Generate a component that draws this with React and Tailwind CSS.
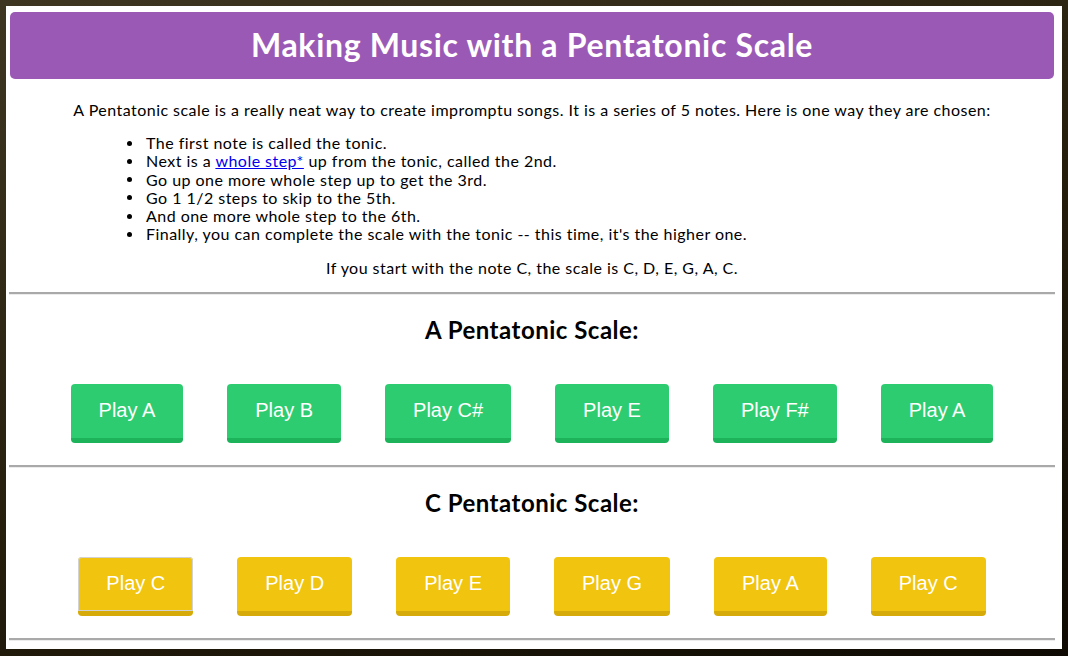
import React from 'react'

const greenNotes = ['A', 'B', 'C#', 'E', 'F#', 'A']
const yellowNotes = ['C', 'D', 'E', 'G', 'A', 'C']

const Divider = () => (
  <div className="ml-[-1px] mr-[-1px] h-[3px] border-t-2 border-[#a9a9a9] border-b border-b-[#ececec]" />
)

const PlayButton = ({ note, color, focused }) => {
  const colors =
    color === 'green'
      ? 'bg-[#2ecc71] border-[#1db35b]'
      : 'bg-[#f1c40f] border-[#d6ab09]'
  return (
    <button
      className={`${colors} ${focused ? 'shadow-[inset_0_0_0_1px_#d2d2d2]' : ''} border-b-[5px] rounded-[4px] px-[28px] pt-[14px] pb-[16px] text-[20px] leading-[24px] text-white font-['Liberation_Sans',Arial,sans-serif]`}
    >
      Play {note}
    </button>
  )
}

const ScaleSection = ({ title, notes, color, top, bottom }) => (
  <section>
    <h2 className={`${top} text-center text-[24px] leading-[28px] font-bold tracking-[0.5px] text-black`}>{title}</h2>
    <div className={`mt-[40px] ${bottom} flex justify-center gap-[44px]`}>
      {notes.map((n, i) => (
        <PlayButton key={i} note={n} color={color} focused={color === 'yellow' && i === 0} />
      ))}
    </div>
    <Divider />
  </section>
)

const steps = [
  'The first note is called the tonic.',
  null,
  'Go up one more whole step up to get the 3rd.',
  'Go 1 1/2 steps to skip to the 5th.',
  'And one more whole step to the 6th.',
  "Finally, you can complete the scale with the tonic -- this time, it's the higher one.",
]

export default function App() {
  return (
    <div className="min-h-screen bg-[linear-gradient(160deg,#3e3621_0%,#241d0c_55%,#0e0a03_100%)] pt-[6px] px-[6px] pb-[7px]">
      <div className="bg-white h-[643px] pt-[6px] pl-[4px] pr-[8px] font-['Lato','Open_Sans',sans-serif] text-black">
        <header className="h-[67px] rounded-[5px] bg-[#9b59b6] flex items-center justify-center">
          <h1 className="text-white text-[32px] font-bold leading-none tracking-[0.67px] -mt-[2px]">Making Music with a Pentatonic Scale</h1>
        </header>

        <div className="text-[16px] leading-[18.2px] tracking-[0.47px]">
          <p className="mt-[22px] text-center">
            A Pentatonic scale is a really neat way to create impromptu songs. It is a series of 5 notes. Here is one way they are chosen:
          </p>
          <ul className="mt-[15px] pl-[117px]">
            {steps.map((t, i) => (
              <li key={i} className="flex items-center">
                <span className="w-[19px] shrink-0 flex items-center">
                  <span className="w-[5px] h-[5px] rounded-full bg-black" />
                </span>
                {t === null ? (
                  <span>
                    Next is a <a href="#" className="text-[#0000ee] underline">whole step*</a> up from the tonic, called the 2nd.
                  </span>
                ) : (
                  <span>{t}</span>
                )}
              </li>
            ))}
          </ul>
          <p className="mt-[16px] mb-[14px] text-center">If you start with the note C, the scale is C, D, E, G, A, C.</p>
        </div>

        <Divider />
        <ScaleSection title="A Pentatonic Scale:" notes={greenNotes} color="green" top="mt-[21px]" bottom="mb-[22px]" />
        <ScaleSection title="C Pentatonic Scale:" notes={yellowNotes} color="yellow" top="mt-[21px]" bottom="mb-[22px]" />
      </div>
    </div>
  )
}
